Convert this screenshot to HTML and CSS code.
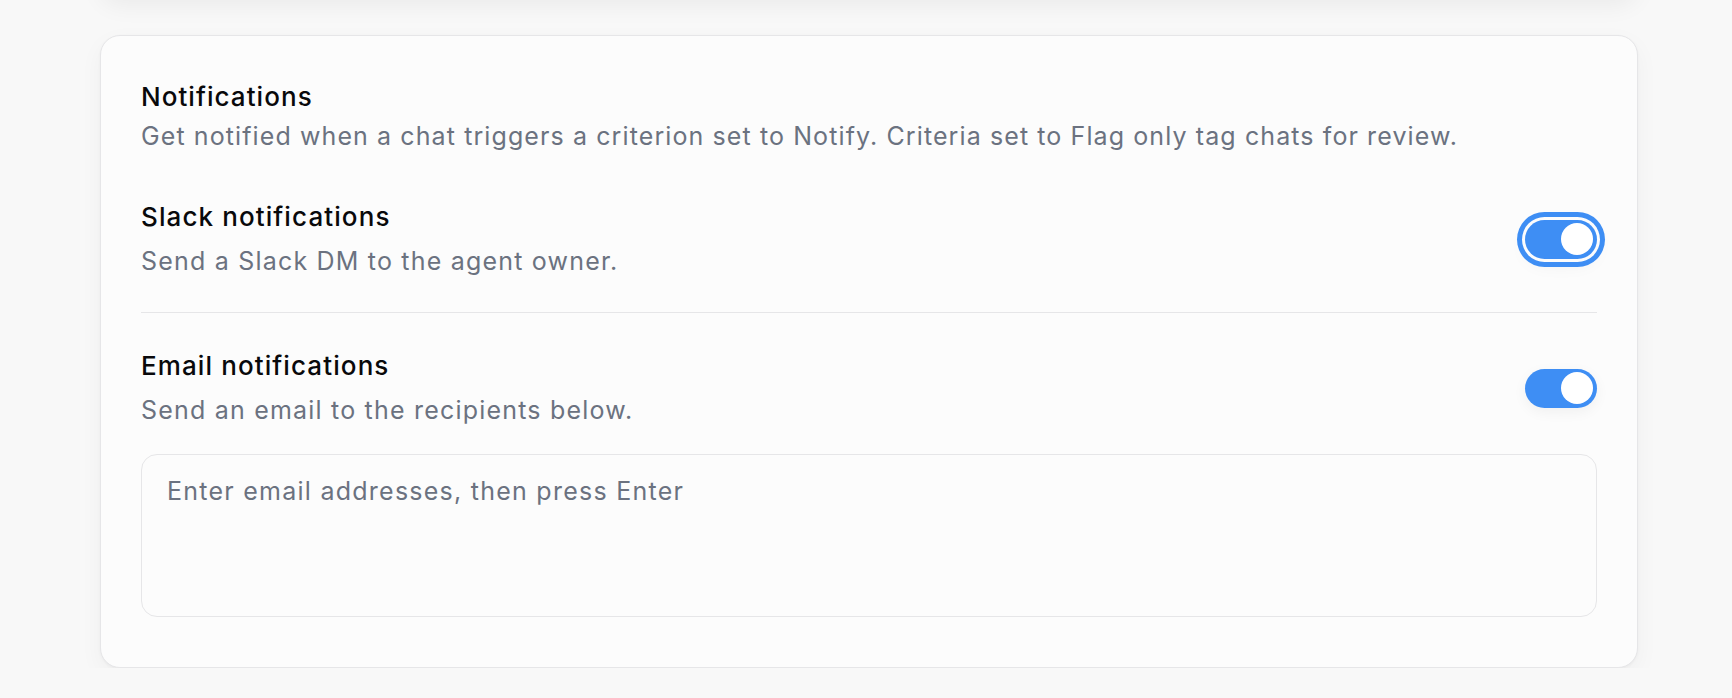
FILE: index.html
```html
<!DOCTYPE html>
<html lang="en">
<head>
<meta charset="utf-8">
<title>Notifications</title>
<link rel="stylesheet" href="styles.css">
</head>
<body>
<div class="page">
  <div class="prev-card"></div>
  <section class="card">
    <header class="card-head">
      <h2 class="card-title">Notifications</h2>
      <p class="card-desc">Get notified when a chat triggers a criterion set to Notify. Criteria set to Flag only tag chats for review.</p>
    </header>
    <div class="setting setting-divided">
      <div class="setting-text">
        <div class="setting-label">Slack notifications</div>
        <div class="setting-desc">Send a Slack DM to the agent owner.</div>
      </div>
      <button class="switch switch-focus" type="button" aria-pressed="true"><span class="knob"></span></button>
    </div>
    <div class="setting-email">
      <div class="setting">
        <div class="setting-text">
          <div class="setting-label">Email notifications</div>
          <div class="setting-desc">Send an email to the recipients below.</div>
        </div>
        <button class="switch" type="button" aria-pressed="true"><span class="knob"></span></button>
      </div>
      <textarea class="email-input" placeholder="Enter email addresses, then press Enter"></textarea>
    </div>
  </section>
</div>
</body>
</html>
```
FILE: styles.css
```css
* { box-sizing: border-box; }
html, body { margin: 0; padding: 0; }
body {
  background: #f8f8f8;
  font-family: Inter, "Noto Sans", sans-serif;
  color: #09090b;
  overflow: hidden;
}
.page {
  padding: 0 94px 0 100px;
}
.prev-card {
  height: 80px;
  margin-top: -81px;
  background: #fcfcfc;
  border-radius: 20px;
  box-shadow: 0 6px 24px rgba(0,0,0,0.06);
}
.card {
  margin-top: 36px;
  background: #fcfcfc;
  border: 1.5px solid #e6e6e8;
  border-radius: 20px;
  padding: 41px 40px 50px;
  box-shadow: 0 8px 24px rgba(0,0,0,0.04), 0 1px 3px rgba(0,0,0,0.04);
}
.card-title {
  margin: 0;
  font-size: 26px;
  font-weight: 500;
  line-height: 39px;
  letter-spacing: 1.05px;
  color: #09090b;
}
.card-desc {
  margin: 0;
  font-size: 25px;
  line-height: 40px;
  letter-spacing: 1.1px;
  color: #6b7280;
}
.setting {
  display: flex;
  align-items: center;
  justify-content: space-between;
  gap: 24px;
}
.setting-divided {
  margin-top: 41px;
  padding-bottom: 31px;
  border-bottom: 1.5px solid #e6e6e8;
}
.setting-email { padding-top: 33px; }
.setting-label {
  font-size: 26px;
  font-weight: 500;
  line-height: 39px;
  letter-spacing: 1.1px;
}
.setting-desc {
  margin-top: 5px;
  font-size: 25px;
  line-height: 40px;
  letter-spacing: 1.2px;
  color: #6b7280;
}
.switch {
  flex: none;
  width: 72px;
  height: 39px;
  padding: 3.5px 4px;
  border: 0;
  border-radius: 20px;
  background: #3e8ef4;
  display: flex;
  justify-content: flex-end;
  box-shadow: 0 4px 14px rgba(0,0,0,0.05);
}
.switch-focus {
  box-shadow: 0 0 0 3px #fcfcfc, 0 0 0 8px #3e8ef4, 0 6px 18px rgba(0,0,0,0.05);
}
.knob {
  width: 32px;
  height: 32px;
  border-radius: 50%;
  background: #fff;
}
.email-input {
  display: block;
  width: 100%;
  height: 163px;
  margin-top: 24px;
  resize: none;
  border: 1.5px solid #e6e6e8;
  border-radius: 16px;
  background: #fcfcfc;
  padding: 18px 25px;
  font-family: Inter, "Noto Sans", sans-serif;
  font-size: 25px;
  line-height: 36px;
  letter-spacing: 1.25px;
  color: #09090b;
  outline: none;
}
.email-input::placeholder { color: #6b7280; }
```
